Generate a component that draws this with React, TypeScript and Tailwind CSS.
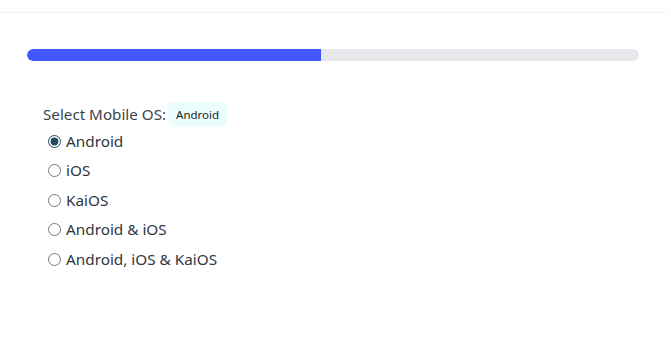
const options = ["Android", "iOS", "KaiOS", "Android & iOS", "Android, iOS & KaiOS"];

export default function App() {
  const selected = "Android";
  return (
    <div
      className="min-h-[356px] bg-white pt-3"
      style={{ fontFamily: '"Noto Sans", "Open Sans", sans-serif' }}
    >
      <div className="h-[344px] border-t border-[#f2f3f5] rounded-tr-lg">
        {/* Progress */}
        <div className="pl-[27px] pr-[32px] pt-[36px]">
          <div className="h-3 w-full rounded-full bg-[#e8e9ed] overflow-hidden">
            <div className="h-full w-[48%] bg-[#4257ff] rounded-l-full"></div>
          </div>
        </div>

        {/* Question */}
        <div className="pl-[43px] pt-[41px]">
          <div className="flex items-center gap-[2px] text-[15.2px] text-[#3b4350]">
            <span>Select Mobile OS:</span>
            <span className="rounded-md bg-[#ebfdfd] px-[8px] py-[4px] text-[11.5px] text-[#14261f]">
              {selected}
            </span>
          </div>
          <div className="mt-[-1px] flex flex-col pl-[5px]">
            {options.map((o) => (
              <label
                key={o}
                className="flex h-[29.5px] items-center gap-[5px] text-[15.3px] text-[#2f3742]"
              >
                <input
                  type="radio"
                  name="os"
                  defaultChecked={o === selected}
                  className="m-0 h-[13px] w-[13px] accent-[#1f4d5a]"
                />
                <span>{o}</span>
              </label>
            ))}
          </div>
        </div>
      </div>
    </div>
  );
}
